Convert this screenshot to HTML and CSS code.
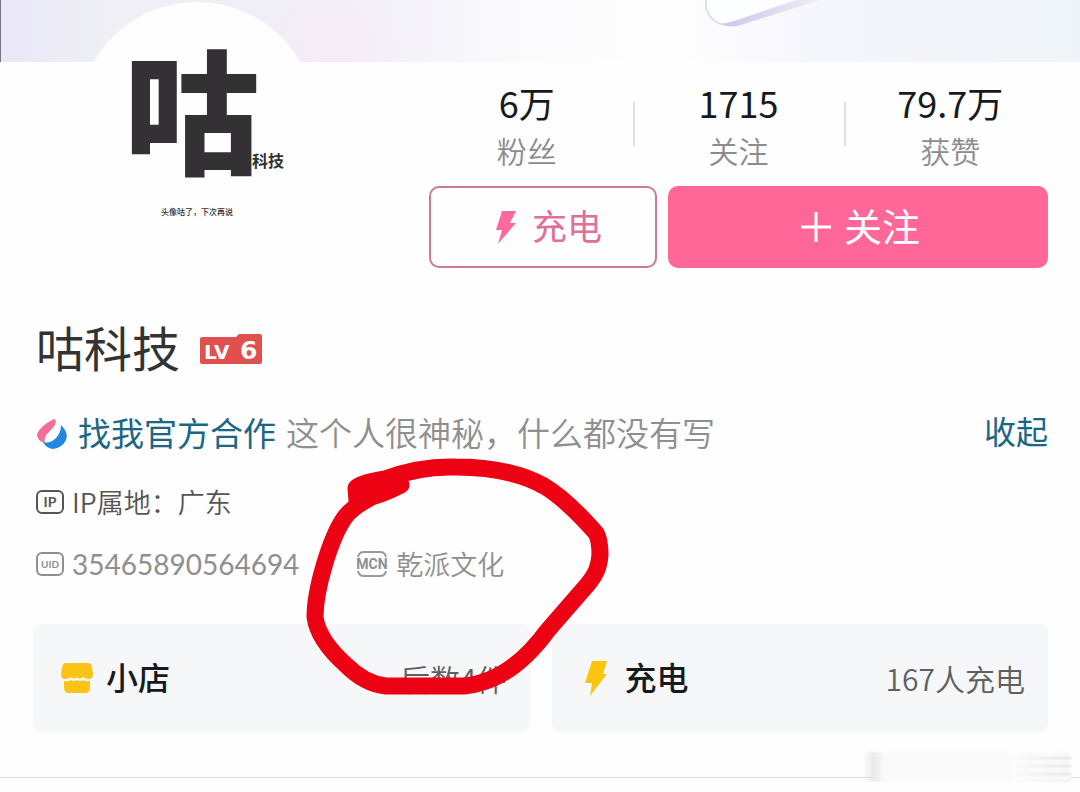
FILE: index.html
```html
<!DOCTYPE html>
<html lang="zh-CN">
<head>
<meta charset="utf-8">
<meta name="viewport" content="width=device-width, initial-scale=1">
<title>咕科技</title>
<link rel="stylesheet" href="styles.css">
</head>
<body>
<main class="page">
  <div class="cover">
    <svg class="cover-art" viewBox="0 0 380 62" aria-hidden="true">
      <defs>
        <linearGradient id="edge" x1="0" y1="0" x2="1" y2="0">
          <stop offset="0" stop-color="#c9c8ee"/><stop offset="1" stop-color="#f3eaf4"/>
        </linearGradient>
      </defs>
      <path d="M6 0V8Q11 24 27 26Q36 25 48 20L118 0Z" fill="#fdfeff"/>
      <path d="M6 0V8Q11 24 27 25" fill="none" stroke="#dfe1ea" stroke-width="2"/>
      <path d="M22 24Q34 22 46 17L96 0H120L44 24Q32 29 22 24Z" fill="url(#edge)"/>
    </svg>
  </div>

  <header class="head">
    <div class="avatar">
      <div class="avatar-logo"><span class="avatar-big">咕</span><span class="avatar-small">科技</span></div>
      <p class="avatar-note">头像咕了，下次再说</p>
    </div>
    <div class="summary">
      <dl class="stats">
        <div class="stat"><dt>粉丝</dt><dd>6万</dd></div>
        <div class="stat"><dt>关注</dt><dd>1715</dd></div>
        <div class="stat"><dt>获赞</dt><dd>79.7万</dd></div>
      </dl>
      <div class="actions">
        <button class="btn btn-outline" type="button">
          <svg width="20" height="34" viewBox="0 0 20 34" aria-hidden="true"><path d="M6 1H20L14 13H20L2 34L6 20H0Z" fill="#fb6a9c"/></svg>
          <span>充电</span>
        </button>
        <button class="btn btn-solid" type="button">
          <svg width="32" height="32" viewBox="0 0 32 32" aria-hidden="true"><path d="M16 1V31M1 16H31" stroke="#fff" stroke-width="3"/></svg>
          <span>关注</span>
        </button>
      </div>
    </div>
  </header>

  <section class="info">
    <div class="name-row">
      <h1>咕科技</h1>
      <svg class="level" width="62" height="32" viewBox="0 0 62 32" role="img" aria-label="LV6">
        <path d="M2 3H36L39 0H60Q62 0 62 2V28Q62 30 60 30H2Q0 30 0 28V5Q0 3 2 3Z" fill="#e0504e"/>
        <text x="4" y="25" class="level-lv">LV</text>
        <text x="40" y="25" class="level-num">6</text>
      </svg>
    </div>

    <div class="bio-row">
      <a class="partner" href="#">
        <svg width="32" height="34" viewBox="0 0 32 34" aria-hidden="true">
          <path d="M18 2Q21 3 19 8Q17 11 13 15Q7 20 9 26Q1 24 1 17Q4 9 18 2Z" fill="#f36d9b"/>
          <path d="M25 8Q33 16 30 23Q26 31 17 32Q10 31 7 25Q14 27 20 21Q25 16 25 8Z" fill="#2187e0"/>
        </svg>
        找我官方合作
      </a>
      <p class="bio">这个人很神秘，什么都没有写</p>
      <button class="collapse" type="button">收起</button>
    </div>

    <p class="meta meta-ip"><span class="tag">IP</span>IP属地：广东</p>
    <div class="meta-row">
      <p class="meta"><span class="tag tag-uid">UID</span><span class="uid">35465890564694</span></p>
      <p class="meta">
        <svg width="32" height="28" viewBox="0 0 32 28" role="img" aria-label="MCN">
          <path d="M2 7Q3 2 8 2H24Q29 2 30 7M2 21Q3 26 8 26H24Q29 26 30 21" fill="none" stroke="#9a9a9a" stroke-width="2"/>
          <text x="16" y="19" text-anchor="middle" class="mcn">MCN</text>
        </svg>
        乾派文化
      </p>
    </div>

    <div class="cards">
      <a class="card" href="#">
        <svg width="34" height="32" viewBox="0 0 34 32" aria-hidden="true">
          <path d="M6 1H28Q31 1 32 5L33 12Q33 17 29 17Q25 17 23 15Q20 18 17 15Q14 18 11 15Q9 17 5 17Q1 17 1 12L2 5Q3 1 6 1Z" fill="#fac318"/>
          <path d="M4 19Q8 20 11 18Q14 20 17 18Q20 20 23 18Q26 20 30 19V26Q30 31 25 31H9Q4 31 4 26Z" fill="#fac318"/>
        </svg>
        <span class="card-title">小店</span>
        <span class="card-value">后数4件</span>
      </a>
      <a class="card" href="#">
        <svg width="34" height="36" viewBox="0 0 34 36" aria-hidden="true"><path d="M13 1H28L24 14H28L11 36L13 23H6Z" fill="#fbc40f"/></svg>
        <span class="card-title">充电</span>
        <span class="card-value">167人充电</span>
      </a>
    </div>
  </section>

  <footer class="foot"><div class="smudge"></div></footer>

  <svg class="marker" width="310" height="244" viewBox="300 455 310 244" aria-hidden="true">
    <path d="M401 485Q380 496 357 501L356 488Q360 483 385 479Q420 466 455 467Q510 467 544 486Q566 499 596 533Q600 540 600 555C599 567 596 574 588 584L548 630Q510 682 464 686H386Q365 684 346 665Q318 640 315 617C315 590 330 538 345 517Q358 500 401 485" fill="none" stroke="#ec0212" stroke-width="17" stroke-linecap="round" stroke-linejoin="round"/>
    <path d="M401 485Q380 496 357 501L356 488Q372 480 401 485Z" fill="#ec0212"/>
  </svg>
</main>
</body>
</html>
```

FILE: styles.css
```css
* { box-sizing: border-box; }

body {
  margin: 0;
  background: #fefefe;
  color: #18191c;
  font-family: "Noto Sans CJK SC", sans-serif;
}

h1, p, dl, dd { margin: 0; }
a { text-decoration: none; }
svg { flex: none; }

.page { position: relative; }

.cover {
  height: 62px;
  border-left: 1px solid #777580;
  background:
    radial-gradient(circle at 31% 80%, #f6ebf7, transparent 10%),
    linear-gradient(90deg, #e9e7f8 0%, #efeff5 10%, #f0eef7 27%, #f4f2f9 36%, #fbfbfd 50%, #fefefe 62%, #f6f6fd 75%, #eff4f8 100%);
}

.cover-art { display: block; width: 380px; height: 62px; margin-left: auto; }

.head {
  display: flex;
  justify-content: space-between;
  padding: 0 32px 0 78px;
}

.avatar {
  flex: none;
  width: 238px;
  height: 238px;
  margin-top: -60px;
  padding-top: 36px;
  border-radius: 50%;
  background: #fefefe;
  color: #333134;
}

.avatar-logo { display: flex; align-items: flex-end; padding-left: 46px; }
.avatar-big { font-size: 136px; line-height: 136px; font-weight: 900; }
.avatar-small { margin: 0 0 4px -8px; font-size: 16px; line-height: 20px; font-weight: 700; white-space: nowrap; }
.avatar-note { margin-top: 32px; font-size: 8px; line-height: 12px; font-weight: 500; text-align: center; }

.summary { flex: 0 1 619px; padding-top: 18px; }

.stats { display: grid; grid-template-columns: repeat(3, 1fr); margin: 0 -8px; }
.stat { position: relative; display: flex; flex-direction: column-reverse; text-align: center; }
.stat + .stat::before {
  content: "";
  position: absolute;
  left: 0;
  top: 22px;
  width: 2px;
  height: 44px;
  background: #dfdfe0;
}
.stat dd { font-size: 36px; line-height: 44px; }
.stat dt { font-size: 30px; line-height: 52px; font-weight: 350; color: #8c8c8c; }

.actions { display: grid; grid-template-columns: 228fr 380fr; gap: 11px; margin-top: 10px; }
.btn {
  display: flex;
  align-items: center;
  justify-content: center;
  height: 82px;
  padding: 0;
  border: 0;
  border-radius: 10px;
  font: inherit;
}
.btn span { padding-bottom: 5px; }
.btn-outline { gap: 16px; padding: 0 12px 0 24px; border: 2px solid #d07898; background: #fefefe; color: #e0709a; font-size: 35px; }
.btn-solid { gap: 12px; padding-left: 4px; background: #fe6798; color: #fff; font-size: 38px; }

.info { padding: 0 32px 0 36px; }

.name-row { display: flex; align-items: center; gap: 20px; margin-top: 46px; }
.name-row h1 { font-size: 48px; line-height: 64px; font-weight: 400; color: #333; }
.level { margin-top: 7px; overflow: visible; fill: #fff; font-family: "DejaVu Sans", sans-serif; font-weight: 700; }
.level-lv { font-size: 20px; }
.level-num { font-size: 25px; }

.bio-row { display: flex; align-items: center; margin-top: 28px; line-height: 48px; }
.partner { display: flex; align-items: center; gap: 10px; color: #1b6684; font-size: 33px; }
.partner svg { margin-top: 4px; }
.bio { margin-left: 10px; font-size: 33px; font-weight: 350; color: #8f8f8f; }
.collapse { margin-left: auto; padding: 0 0 4px; border: 0; background: none; color: #1b6684; font: inherit; font-size: 32px; }

.meta { display: flex; align-items: center; gap: 8px; font-size: 27px; line-height: 40px; font-weight: 350; color: #8f8f8f; }
.meta-ip { margin-top: 24px; color: #555; }
.meta-row { display: flex; gap: 57px; margin-top: 22px; }
.uid { font-family: Lato, sans-serif; font-size: 28px; font-weight: 400; }
.tag {
  width: 28px;
  height: 24px;
  border: 2px solid currentColor;
  border-radius: 6px;
  font: 700 14px/20px Lato, sans-serif;
  text-align: center;
}
.tag-uid { font-size: 10px; }
.mcn { fill: #8f8f8f; font: 700 14px Roboto, sans-serif; }

.cards { display: grid; grid-template-columns: 1fr 1fr; gap: 22px; margin: 40px 0 0 -3px; }
.card {
  display: flex;
  align-items: center;
  gap: 12px;
  height: 108px;
  padding: 0 23px 0 27px;
  border-radius: 8px;
  background: #f5f7f8;
  color: #18191c;
}
.card-title { padding-bottom: 5px; font-size: 32px; font-weight: 500; }
.card-value { margin-left: auto; font-size: 30px; font-weight: 350; color: #5f5f5f; }

.foot { margin-top: 45px; border-top: 1px solid #dedede; }
.smudge {
  width: 208px;
  height: 30px;
  margin: -26px 9px 0 auto;
  background:
    linear-gradient(90deg, #fcfcfc, transparent) right / 60px 100% no-repeat,
    repeating-linear-gradient(180deg, transparent 0 4px, #d8d8d8 6px, transparent 8px) right / 60px 100% no-repeat,
    linear-gradient(90deg, transparent, #e9e9e9 5%, #fafafa 10%, #fafafa 100%);
  filter: blur(1px);
}

.marker { position: absolute; left: 300px; top: 455px; }
```
